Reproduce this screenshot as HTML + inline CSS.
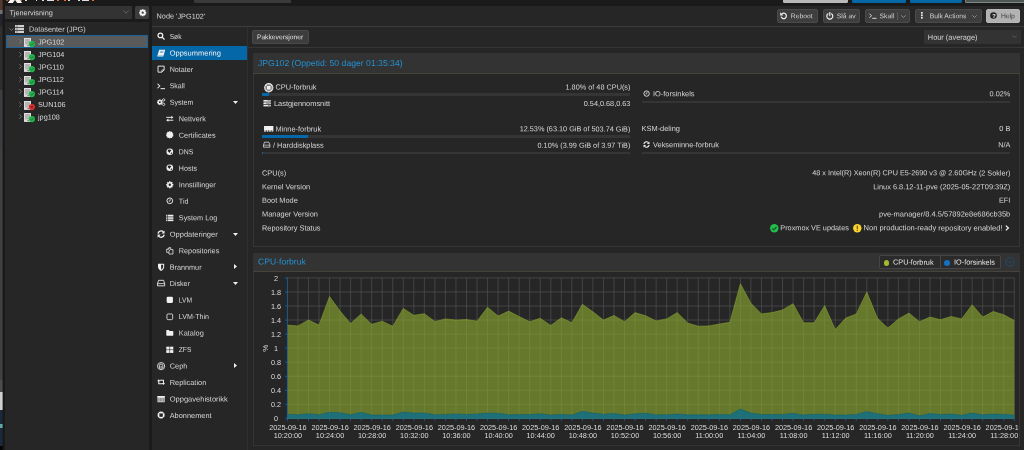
<!DOCTYPE html>
<html lang="nb">
<head>
<meta charset="utf-8">
<title>JPG102 - Proxmox Virtual Environment</title>
<style>
html,body{margin:0;padding:0;}
body{width:1024px;height:450px;overflow:hidden;background:#1b1b1b;position:relative;font-family:"Liberation Sans",sans-serif;}
.b{position:absolute;box-sizing:border-box;}
.t{position:absolute;white-space:nowrap;line-height:10px;height:10px;}
svg{position:absolute;overflow:visible;}
svg text{font-family:"Liberation Sans",sans-serif;}
#app{position:absolute;left:0;top:0;width:1024px;height:450px;overflow:hidden;will-change:transform;}
</style>
</head>
<body>
<div id="app">

<div id="desk">
<div class="b" style="left:0.00px;top:0.00px;width:3.20px;height:9.50px;background:#553a30;"></div>
<div class="b" style="left:0.00px;top:9.50px;width:3.20px;height:4.00px;background:#707070;"></div>
<div class="b" style="left:0.00px;top:13.50px;width:3.20px;height:12.50px;background:#22252c;"></div>
<div class="b" style="left:0.00px;top:26.00px;width:3.20px;height:64.00px;background:#2e2e2e;"></div>
<div class="b" style="left:0.00px;top:90.00px;width:3.20px;height:60.00px;background:#3a3e41;"></div>
<div class="b" style="left:0.00px;top:150.00px;width:3.20px;height:230.00px;background:#404040;"></div>
<div class="b" style="left:0.00px;top:380.00px;width:3.20px;height:12.00px;background:#4c4c4c;"></div>
<div class="b" style="left:0.00px;top:392.00px;width:3.20px;height:18.00px;background:#cfcfcf;"></div>
<div class="b" style="left:0.00px;top:410.00px;width:3.20px;height:36.00px;background:#1a2a3c;"></div>
<div class="b" style="left:0.00px;top:424.00px;width:3.20px;height:4.00px;background:#5fa9a0;"></div>
<div class="b" style="left:0.00px;top:446.00px;width:3.20px;height:4.00px;background:#050505;"></div>
<div class="b" style="left:2.00px;top:0.00px;width:3.00px;height:450.00px;background:linear-gradient(90deg,rgba(22,22,22,0),#171717 45%,#1b1b1b);"></div>
</div>
<div id="header">
<div class="b" style="left:3.00px;top:0.00px;width:1021.00px;height:5.50px;background:#1a1a1a;"></div>
<div class="b" style="left:5.90px;top:0.00px;width:2.40px;height:1.40px;background:#e5701f;border-radius:0 0 1px 1px;"></div>
<div class="b" style="left:20.00px;top:0.00px;width:2.40px;height:1.40px;background:#e5701f;border-radius:0 0 1px 1px;"></div>
<div class="b" style="left:9.00px;top:0.00px;width:4.50px;height:2.60px;background:#f4f4f4;transform:skewX(-35deg);"></div>
<div class="b" style="left:15.50px;top:0.00px;width:4.50px;height:2.60px;background:#f4f4f4;transform:skewX(35deg);"></div>
<div class="b" style="left:25.00px;top:0.00px;width:1.50px;height:0.45px;background:#ddd;"></div>
<div class="b" style="left:35.50px;top:0.00px;width:1.50px;height:0.45px;background:#ddd;"></div>
<div class="b" style="left:42.00px;top:0.00px;width:2.00px;height:0.45px;background:#ddd;"></div>
<div class="b" style="left:47.00px;top:0.00px;width:7.00px;height:0.45px;background:#ddd;"></div>
<div class="b" style="left:57.00px;top:0.00px;width:2.00px;height:0.45px;background:#e5701f;"></div>
<div class="b" style="left:63.50px;top:0.00px;width:2.50px;height:0.45px;background:#e5701f;"></div>
<div class="b" style="left:68.00px;top:0.00px;width:2.00px;height:0.45px;background:#ddd;"></div>
<div class="b" style="left:78.00px;top:0.00px;width:2.00px;height:0.45px;background:#ddd;"></div>
<div class="b" style="left:82.00px;top:0.00px;width:7.00px;height:0.45px;background:#ddd;"></div>
<div class="b" style="left:92.00px;top:0.00px;width:1.50px;height:0.45px;background:#e5701f;"></div>
<div class="b" style="left:194.20px;top:0.00px;width:96.60px;height:2.70px;background:#3a3a3a;border-radius:0 0 1px 1px;"></div>
<div class="b" style="left:783.00px;top:0.00px;width:64.80px;height:2.70px;background:#b9b9b9;border-radius:0 0 1.5px 1.5px;"></div>
<div class="b" style="left:852.00px;top:0.00px;width:53.50px;height:2.70px;background:#0467a8;border-radius:0 0 1.5px 1.5px;"></div>
<div class="b" style="left:909.50px;top:0.00px;width:52.50px;height:2.70px;background:#0467a8;border-radius:0 0 1.5px 1.5px;"></div>
<div class="b" style="left:965.00px;top:0.00px;width:60.00px;height:2.80px;background:#4d5653;border-radius:0 0 0 1.5px;border:0.5px solid #7c8886;border-top:0;"></div>
</div>
<div id="west">
<div class="b" style="left:5.00px;top:5.60px;width:127.30px;height:13.70px;background:#333333;"></div>
<svg class="ts" style="left:9px;top:15px" width="1" height="1"><text x="0.40" y="0.30" font-size="7.3" fill="#d8d8d8" text-anchor="start" transform="rotate(0.05 0.40 0.30)">Tjenervisning</text></svg>
<svg style="left:122.5px;top:10.4px" width="6" height="4" viewBox="0 0 6 4"><path d="M0.4 0.5 L3 3.2 L5.6 0.5" fill="none" stroke="#777" stroke-width="0.7"/></svg>
<div class="b" style="left:135.10px;top:5.60px;width:14.00px;height:13.60px;background:#3d3d3d;border-radius:1.5px;"></div>
<svg style="left:138.9px;top:8.7px" width="7.4" height="7.4" viewBox="0 0 14 14"><g fill="#f2f2f2"><rect x="5.3" y="0.3" width="3.4" height="3.6" transform="rotate(0 7 7)"/><rect x="5.3" y="0.3" width="3.4" height="3.6" transform="rotate(45 7 7)"/><rect x="5.3" y="0.3" width="3.4" height="3.6" transform="rotate(90 7 7)"/><rect x="5.3" y="0.3" width="3.4" height="3.6" transform="rotate(135 7 7)"/><rect x="5.3" y="0.3" width="3.4" height="3.6" transform="rotate(180 7 7)"/><rect x="5.3" y="0.3" width="3.4" height="3.6" transform="rotate(225 7 7)"/><rect x="5.3" y="0.3" width="3.4" height="3.6" transform="rotate(270 7 7)"/><rect x="5.3" y="0.3" width="3.4" height="3.6" transform="rotate(315 7 7)"/></g><circle cx="7" cy="7" r="3.7" fill="none" stroke="#f2f2f2" stroke-width="3"/></svg>
<div class="b" style="left:5.00px;top:21.70px;width:144.10px;height:430.00px;background:#262626;"></div>
<svg style="left:8.6px;top:28.2px" width="5" height="3" viewBox="0 0 5 3"><path d="M0.3 0.3 L2.5 2.5 L4.7 0.3" fill="none" stroke="#8a8a8a" stroke-width="0.7"/></svg>
<svg style="left:15px;top:25.2px" width="9" height="8" viewBox="0 0 9 8"><g fill="#cfcfcf"><rect x="0" y="0" width="9" height="2.2"/><rect x="0" y="2.9" width="9" height="2.2"/><rect x="0" y="5.8" width="9" height="2.2"/></g><g fill="#777"><rect x="0.8" y="0.7" width="2.2" height="0.8"/><rect x="0.8" y="3.6" width="2.2" height="0.8"/><rect x="0.8" y="6.5" width="2.2" height="0.8"/></g></svg>
<svg class="ts" style="left:28px;top:31px" width="1" height="1"><text x="0.90" y="0.60" font-size="7.3" fill="#d6d6d6" text-anchor="start" transform="rotate(0.05 0.90 0.60)">Datasenter (JPG)</text></svg>
<div class="b" style="left:6.00px;top:35.20px;width:142.10px;height:12.50px;background:#5a5a5a;border:0.7px solid #1c629a;"></div>
<svg style="left:19.4px;top:39.1px" width="3" height="5" viewBox="0 0 3 5"><path d="M0.3 0.3 L2.5 2.5 L0.3 4.7" fill="none" stroke="#8a8a8a" stroke-width="0.7"/></svg>
<svg style="left:23.8px;top:38.00px" width="12" height="10" viewBox="0 0 12 10"><rect x="0" y="0" width="7" height="8.9" fill="#dedede"/><rect x="1.1" y="1" width="4.8" height="5.6" fill="#b4b4b4"/><rect x="3.4" y="7.3" width="1.4" height="0.8" fill="#444"/><circle cx="7.9" cy="6.1" r="3.1" fill="#1fb649"/><path d="M6.3 6.1 L7.5 7.3 L9.6 5.0" fill="none" stroke="#2a6b40" stroke-width="0.9"/></svg>
<svg class="ts" style="left:38px;top:44px" width="1" height="1"><text x="0.00" y="0.50" font-size="7.3" fill="#d6d6d6" text-anchor="start" transform="rotate(0.05 0.00 0.50)">JPG102</text></svg>
<svg style="left:19.4px;top:51.6px" width="3" height="5" viewBox="0 0 3 5"><path d="M0.3 0.3 L2.5 2.5 L0.3 4.7" fill="none" stroke="#8a8a8a" stroke-width="0.7"/></svg>
<svg style="left:23.8px;top:50.50px" width="12" height="10" viewBox="0 0 12 10"><rect x="0" y="0" width="7" height="8.9" fill="#dedede"/><rect x="1.1" y="1" width="4.8" height="5.6" fill="#b4b4b4"/><rect x="3.4" y="7.3" width="1.4" height="0.8" fill="#444"/><circle cx="7.9" cy="6.1" r="3.1" fill="#1fb649"/><path d="M6.3 6.1 L7.5 7.3 L9.6 5.0" fill="none" stroke="#2a6b40" stroke-width="0.9"/></svg>
<svg class="ts" style="left:38px;top:57px" width="1" height="1"><text x="0.00" y="0.00" font-size="7.3" fill="#d6d6d6" text-anchor="start" transform="rotate(0.05 0.00 0.00)">JPG104</text></svg>
<svg style="left:19.4px;top:64.10000000000001px" width="3" height="5" viewBox="0 0 3 5"><path d="M0.3 0.3 L2.5 2.5 L0.3 4.7" fill="none" stroke="#8a8a8a" stroke-width="0.7"/></svg>
<svg style="left:23.8px;top:63.00px" width="12" height="10" viewBox="0 0 12 10"><rect x="0" y="0" width="7" height="8.9" fill="#dedede"/><rect x="1.1" y="1" width="4.8" height="5.6" fill="#b4b4b4"/><rect x="3.4" y="7.3" width="1.4" height="0.8" fill="#444"/><circle cx="7.9" cy="6.1" r="3.1" fill="#1fb649"/><path d="M6.3 6.1 L7.5 7.3 L9.6 5.0" fill="none" stroke="#2a6b40" stroke-width="0.9"/></svg>
<svg class="ts" style="left:38px;top:69px" width="1" height="1"><text x="0.00" y="0.50" font-size="7.3" fill="#d6d6d6" text-anchor="start" transform="rotate(0.05 0.00 0.50)">JPG110</text></svg>
<svg style="left:19.4px;top:76.60000000000001px" width="3" height="5" viewBox="0 0 3 5"><path d="M0.3 0.3 L2.5 2.5 L0.3 4.7" fill="none" stroke="#8a8a8a" stroke-width="0.7"/></svg>
<svg style="left:23.8px;top:75.50px" width="12" height="10" viewBox="0 0 12 10"><rect x="0" y="0" width="7" height="8.9" fill="#dedede"/><rect x="1.1" y="1" width="4.8" height="5.6" fill="#b4b4b4"/><rect x="3.4" y="7.3" width="1.4" height="0.8" fill="#444"/><circle cx="7.9" cy="6.1" r="3.1" fill="#1fb649"/><path d="M6.3 6.1 L7.5 7.3 L9.6 5.0" fill="none" stroke="#2a6b40" stroke-width="0.9"/></svg>
<svg class="ts" style="left:38px;top:82px" width="1" height="1"><text x="0.00" y="0.00" font-size="7.3" fill="#d6d6d6" text-anchor="start" transform="rotate(0.05 0.00 0.00)">JPG112</text></svg>
<svg style="left:19.4px;top:89.10000000000001px" width="3" height="5" viewBox="0 0 3 5"><path d="M0.3 0.3 L2.5 2.5 L0.3 4.7" fill="none" stroke="#8a8a8a" stroke-width="0.7"/></svg>
<svg style="left:23.8px;top:88.00px" width="12" height="10" viewBox="0 0 12 10"><rect x="0" y="0" width="7" height="8.9" fill="#dedede"/><rect x="1.1" y="1" width="4.8" height="5.6" fill="#b4b4b4"/><rect x="3.4" y="7.3" width="1.4" height="0.8" fill="#444"/><circle cx="7.9" cy="6.1" r="3.1" fill="#1fb649"/><path d="M6.3 6.1 L7.5 7.3 L9.6 5.0" fill="none" stroke="#2a6b40" stroke-width="0.9"/></svg>
<svg class="ts" style="left:38px;top:94px" width="1" height="1"><text x="0.00" y="0.50" font-size="7.3" fill="#d6d6d6" text-anchor="start" transform="rotate(0.05 0.00 0.50)">JPG114</text></svg>
<svg style="left:19.4px;top:101.60000000000001px" width="3" height="5" viewBox="0 0 3 5"><path d="M0.3 0.3 L2.5 2.5 L0.3 4.7" fill="none" stroke="#8a8a8a" stroke-width="0.7"/></svg>
<svg style="left:23.8px;top:100.50px" width="12" height="10" viewBox="0 0 12 10"><rect x="0" y="0" width="7" height="8.9" fill="#dedede"/><rect x="1.1" y="1" width="4.8" height="5.6" fill="#b4b4b4"/><rect x="3.4" y="7.3" width="1.4" height="0.8" fill="#444"/><circle cx="7.9" cy="6.1" r="3.1" fill="#dd2c2c"/><path d="M6.7 4.9 L9.1 7.3 M9.1 4.9 L6.7 7.3" fill="none" stroke="#6b2020" stroke-width="0.8"/></svg>
<svg class="ts" style="left:38px;top:107px" width="1" height="1"><text x="0.00" y="0.00" font-size="7.3" fill="#d6d6d6" text-anchor="start" transform="rotate(0.05 0.00 0.00)">SUN106</text></svg>
<svg style="left:19.4px;top:114.10000000000001px" width="3" height="5" viewBox="0 0 3 5"><path d="M0.3 0.3 L2.5 2.5 L0.3 4.7" fill="none" stroke="#8a8a8a" stroke-width="0.7"/></svg>
<svg style="left:23.8px;top:113.00px" width="12" height="10" viewBox="0 0 12 10"><rect x="0" y="0" width="7" height="8.9" fill="#dedede"/><rect x="1.1" y="1" width="4.8" height="5.6" fill="#b4b4b4"/><rect x="3.4" y="7.3" width="1.4" height="0.8" fill="#444"/><circle cx="7.9" cy="6.1" r="3.1" fill="#1fb649"/><path d="M6.3 6.1 L7.5 7.3 L9.6 5.0" fill="none" stroke="#2a6b40" stroke-width="0.9"/></svg>
<svg class="ts" style="left:38px;top:119px" width="1" height="1"><text x="0.00" y="0.50" font-size="7.3" fill="#d6d6d6" text-anchor="start" transform="rotate(0.05 0.00 0.50)">jpg108</text></svg>
</div>
<div id="center">
<div class="b" style="left:151.90px;top:5.60px;width:873.00px;height:445.00px;background:#262626;"></div>
<svg class="ts" style="left:156px;top:18px" width="1" height="1"><text x="0.60" y="0.60" font-size="7.3" fill="#d6d6d6" text-anchor="start" transform="rotate(0.05 0.60 0.60)">Node 'JPG102'</text></svg>
<div class="b" style="left:151.90px;top:26.10px;width:873.00px;height:0.70px;background:#3c3c3c;"></div>
<div class="b" style="left:776.70px;top:9.10px;width:41.10px;height:13.60px;background:#3e3e3e;border-radius:2px;border:0.6px solid #4a4a4a;"></div>
<svg style="left:780.0px;top:11.9px" width="7.4" height="7.4" viewBox="0 0 14 14"><path d="M3.4 3.8 A5.1 5.1 0 1 1 2.1 8.8" fill="none" stroke="#f0f0f0" stroke-width="2.3"/><path d="M0.4 0.6 L0.4 6.4 L6.2 6.4 Z" fill="#f0f0f0"/></svg>
<svg class="ts" style="left:790px;top:18px" width="1" height="1"><text x="0.80" y="0.20" font-size="6.75" fill="#cdcdcd" text-anchor="start" transform="rotate(0.05 0.80 0.20)">Reboot</text></svg>
<div class="b" style="left:822.90px;top:9.10px;width:37.60px;height:13.60px;background:#3e3e3e;border-radius:2px;border:0.6px solid #4a4a4a;"></div>
<svg style="left:825.7px;top:11.8px" width="7.6" height="7.6" viewBox="0 0 14 14"><path d="M3.8 3.2 A5.5 5.5 0 1 0 10.2 3.2" fill="none" stroke="#f0f0f0" stroke-width="2.1" stroke-linecap="round"/><path d="M7 0.9 L7 6.8" stroke="#f0f0f0" stroke-width="2.1" stroke-linecap="round"/></svg>
<svg class="ts" style="left:836px;top:18px" width="1" height="1"><text x="0.80" y="0.20" font-size="6.75" fill="#cdcdcd" text-anchor="start" transform="rotate(0.05 0.80 0.20)">Slå av</text></svg>
<div class="b" style="left:865.00px;top:9.10px;width:45.00px;height:13.60px;background:#3e3e3e;border-radius:2px;border:0.6px solid #4a4a4a;"></div>
<svg style="left:868.6px;top:12.8px" width="8" height="6" viewBox="0 0 16 12"><path d="M1 1.5 L5 5.5 L1 9.5" fill="none" stroke="#f0f0f0" stroke-width="1.8"/><path d="M6.5 10.6 L15 10.6" stroke="#f0f0f0" stroke-width="1.8"/></svg>
<svg class="ts" style="left:879px;top:18px" width="1" height="1"><text x="0.60" y="0.20" font-size="6.75" fill="#cdcdcd" text-anchor="start" transform="rotate(0.05 0.60 0.20)">Skall</text></svg>
<div class="b" style="left:897.30px;top:11.60px;width:0.60px;height:8.40px;background:#5a5a5a;"></div>
<svg style="left:901.3px;top:14.7px" width="5" height="3" viewBox="0 0 5 3"><path d="M0.3 0.3 L2.5 2.5 L4.7 0.3" fill="none" stroke="#aaa" stroke-width="0.7"/></svg>
<div class="b" style="left:915.10px;top:9.10px;width:66.50px;height:13.60px;background:#3e3e3e;border-radius:2px;border:0.6px solid #4a4a4a;"></div>
<svg style="left:921.1px;top:12.4px" width="1.7" height="6.8" viewBox="0 0 2 8"><g fill="#f0f0f0"><rect x="0" y="0" width="2" height="2"/><rect x="0" y="2.9" width="2" height="2"/><rect x="0" y="5.8" width="2" height="2"/></g></svg>
<svg class="ts" style="left:929px;top:18px" width="1" height="1"><text x="0.70" y="0.20" font-size="6.75" fill="#cdcdcd" text-anchor="start" transform="rotate(0.05 0.70 0.20)">Bulk Actions</text></svg>
<svg style="left:971.7px;top:14.7px" width="5" height="3" viewBox="0 0 5 3"><path d="M0.3 0.3 L2.5 2.5 L4.7 0.3" fill="none" stroke="#aaa" stroke-width="0.7"/></svg>
<div class="b" style="left:986.20px;top:9.10px;width:33.50px;height:13.60px;background:#b2b2b2;border-radius:2px;border:0.6px solid #b8b8b8;"></div>
<svg style="left:990.4px;top:12.4px" width="7" height="7" viewBox="0 0 14 14"><circle cx="7" cy="7" r="6.6" fill="#222"/></svg>
<svg class="ts" style="left:993px;top:18px" width="1" height="1"><text x="0.90" y="0.00" font-size="5.8" fill="#f4f4f4" text-anchor="middle" transform="rotate(0.05 0.90 0.00)" font-weight="bold">?</text></svg>
<svg class="ts" style="left:1000px;top:18px" width="1" height="1"><text x="0.90" y="0.20" font-size="6.75" fill="#404040" text-anchor="start" transform="rotate(0.05 0.90 0.20)">Help</text></svg>
<div id="menu">
<svg style="left:156.90px;top:32.10px" width="8.2" height="8.2" viewBox="0 0 16 16"><circle cx="6.6" cy="6.6" r="4.6" fill="none" stroke="#f0f0f0" stroke-width="2.4"/><path d="M10 10 L14 14" stroke="#f0f0f0" stroke-width="2.6" stroke-linecap="round"/></svg>
<svg class="ts" style="left:169px;top:38px" width="1" height="1"><text x="0.70" y="0.90" font-size="7.3" fill="#d6d6d6" text-anchor="start" transform="rotate(0.05 0.70 0.90)" textLength="11.8" lengthAdjust="spacingAndGlyphs">Søk</text></svg>
<div class="b" style="left:151.90px;top:45.88px;width:95.10px;height:13.80px;background:#0467a8;"></div>
<svg style="left:156.90px;top:48.58px" width="8.2" height="8.2" viewBox="0 0 16 16"><path d="M4.6 1.6 L15.4 1.6 Q16 1.6 15.8 2.4 L13 12.4 L12.2 14.6 L1.6 14.6 Q0.2 14.6 0.6 13 L1.4 11.4 L4 2.4 Q4.2 1.6 4.6 1.6 Z" fill="#f0f0f0"/><path d="M6.4 4.6 L12.6 4.6 M5.8 6.8 L12 6.8" stroke="#0467a8" stroke-width="0.9"/><path d="M2.4 12.6 L11.6 12.6" stroke="#0467a8" stroke-width="0.9" opacity="0.7"/></svg>
<svg class="ts" style="left:169px;top:55px" width="1" height="1"><text x="0.70" y="0.38" font-size="7.3" fill="#f4f4f4" text-anchor="start" transform="rotate(0.05 0.70 0.38)" textLength="51.2" lengthAdjust="spacingAndGlyphs">Oppsummering</text></svg>
<svg style="left:156.90px;top:65.06px" width="8.2" height="8.2" viewBox="0 0 16 16"><path d="M2 2.2 L14 2.2 L14 9.6 L9.6 14 L2 14 Z" fill="none" stroke="#f0f0f0" stroke-width="1.8" stroke-linejoin="round"/><path d="M14 9.6 L9.6 9.6 L9.6 14" fill="none" stroke="#f0f0f0" stroke-width="1.4"/></svg>
<svg class="ts" style="left:169px;top:71px" width="1" height="1"><text x="0.70" y="0.86" font-size="7.3" fill="#d6d6d6" text-anchor="start" transform="rotate(0.05 0.70 0.86)" textLength="23.4" lengthAdjust="spacingAndGlyphs">Notater</text></svg>
<svg style="left:156.90px;top:81.54px" width="8.2" height="8.2" viewBox="0 0 16 16"><path d="M1 3.4 L5.4 7.8 L1 12.2" fill="none" stroke="#f0f0f0" stroke-width="2"/><path d="M7 13 L15.6 13" stroke="#f0f0f0" stroke-width="2"/></svg>
<svg class="ts" style="left:169px;top:88px" width="1" height="1"><text x="0.70" y="0.34" font-size="7.3" fill="#d6d6d6" text-anchor="start" transform="rotate(0.05 0.70 0.34)" textLength="15.1" lengthAdjust="spacingAndGlyphs">Skall</text></svg>
<svg style="left:156.90px;top:98.02px" width="8.2" height="8.2" viewBox="0 0 16 16"><g fill="#f0f0f0"><circle cx="5.6" cy="8.2" r="4"/><rect x="4.3" y="2.6" width="2.6" height="3" transform="rotate(0 5.6 8.2)"/><rect x="4.3" y="2.6" width="2.6" height="3" transform="rotate(45 5.6 8.2)"/><rect x="4.3" y="2.6" width="2.6" height="3" transform="rotate(90 5.6 8.2)"/><rect x="4.3" y="2.6" width="2.6" height="3" transform="rotate(135 5.6 8.2)"/><rect x="4.3" y="2.6" width="2.6" height="3" transform="rotate(180 5.6 8.2)"/><rect x="4.3" y="2.6" width="2.6" height="3" transform="rotate(225 5.6 8.2)"/><rect x="4.3" y="2.6" width="2.6" height="3" transform="rotate(270 5.6 8.2)"/><rect x="4.3" y="2.6" width="2.6" height="3" transform="rotate(315 5.6 8.2)"/></g><circle cx="5.6" cy="8.2" r="1.8" fill="#262626"/><circle cx="13" cy="3.8" r="2.3" fill="none" stroke="#f0f0f0" stroke-width="1.5"/><circle cx="13" cy="12.4" r="2.3" fill="none" stroke="#f0f0f0" stroke-width="1.5"/></svg>
<svg class="ts" style="left:169px;top:104px" width="1" height="1"><text x="0.70" y="0.82" font-size="7.3" fill="#d6d6d6" text-anchor="start" transform="rotate(0.05 0.70 0.82)" textLength="23.8" lengthAdjust="spacingAndGlyphs">System</text></svg>
<svg style="left:233.2px;top:100.82px" width="5" height="3" viewBox="0 0 5 3"><path d="M0 0 L5 0 L2.5 3 Z" fill="#f0f0f0"/></svg>
<svg style="left:166.20px;top:114.80px" width="7.6" height="7.6" viewBox="0 0 16 16"><path d="M0.6 5 L12 5" stroke="#f0f0f0" stroke-width="2"/><path d="M11 1.6 L15.6 5 L11 8.4 Z" fill="#f0f0f0"/><path d="M4 11 L15.4 11" stroke="#f0f0f0" stroke-width="2"/><path d="M5 7.6 L0.4 11 L5 14.4 Z" fill="#f0f0f0"/></svg>
<svg class="ts" style="left:178px;top:121px" width="1" height="1"><text x="0.80" y="0.30" font-size="7.3" fill="#d6d6d6" text-anchor="start" transform="rotate(0.05 0.80 0.30)" textLength="27.0" lengthAdjust="spacingAndGlyphs">Nettverk</text></svg>
<svg style="left:166.20px;top:131.28px" width="7.6" height="7.6" viewBox="0 0 16 16"><circle cx="8" cy="8" r="6.6" fill="#f0f0f0"/><circle cx="8" cy="1.6" r="1.5" fill="#f0f0f0" transform="rotate(0 8 8)"/><circle cx="8" cy="1.6" r="1.5" fill="#f0f0f0" transform="rotate(36 8 8)"/><circle cx="8" cy="1.6" r="1.5" fill="#f0f0f0" transform="rotate(72 8 8)"/><circle cx="8" cy="1.6" r="1.5" fill="#f0f0f0" transform="rotate(108 8 8)"/><circle cx="8" cy="1.6" r="1.5" fill="#f0f0f0" transform="rotate(144 8 8)"/><circle cx="8" cy="1.6" r="1.5" fill="#f0f0f0" transform="rotate(180 8 8)"/><circle cx="8" cy="1.6" r="1.5" fill="#f0f0f0" transform="rotate(216 8 8)"/><circle cx="8" cy="1.6" r="1.5" fill="#f0f0f0" transform="rotate(252 8 8)"/><circle cx="8" cy="1.6" r="1.5" fill="#f0f0f0" transform="rotate(288 8 8)"/><circle cx="8" cy="1.6" r="1.5" fill="#f0f0f0" transform="rotate(324 8 8)"/></svg>
<svg class="ts" style="left:178px;top:137px" width="1" height="1"><text x="0.80" y="0.78" font-size="7.3" fill="#d6d6d6" text-anchor="start" transform="rotate(0.05 0.80 0.78)" textLength="36.8" lengthAdjust="spacingAndGlyphs">Certificates</text></svg>
<svg style="left:166.20px;top:147.76px" width="7.6" height="7.6" viewBox="0 0 16 16"><circle cx="8" cy="8" r="7" fill="#f0f0f0"/><path d="M4 3.6 L8.6 3 L11.4 5.2 L9 7.6 L7.6 10.4 L5.6 8.2 L3.6 7 Z" fill="#262626"/><path d="M10.4 10 L13 9 L12 12.4 L10 13 Z" fill="#262626"/></svg>
<svg class="ts" style="left:178px;top:154px" width="1" height="1"><text x="0.80" y="0.26" font-size="7.3" fill="#d6d6d6" text-anchor="start" transform="rotate(0.05 0.80 0.26)" textLength="14.6" lengthAdjust="spacingAndGlyphs">DNS</text></svg>
<svg style="left:166.20px;top:164.24px" width="7.6" height="7.6" viewBox="0 0 16 16"><circle cx="8" cy="8" r="7" fill="#f0f0f0"/><path d="M4 3.6 L8.6 3 L11.4 5.2 L9 7.6 L7.6 10.4 L5.6 8.2 L3.6 7 Z" fill="#262626"/><path d="M10.4 10 L13 9 L12 12.4 L10 13 Z" fill="#262626"/></svg>
<svg class="ts" style="left:178px;top:170px" width="1" height="1"><text x="0.80" y="0.74" font-size="7.3" fill="#d6d6d6" text-anchor="start" transform="rotate(0.05 0.80 0.74)" textLength="18.2" lengthAdjust="spacingAndGlyphs">Hosts</text></svg>
<svg style="left:166.20px;top:180.72px" width="7.6" height="7.6" viewBox="0 0 16 16"><g fill="#f0f0f0"><circle cx="8" cy="8" r="5.4"/><rect x="6.3" y="0.6" width="3.4" height="4" transform="rotate(0 8 8)"/><rect x="6.3" y="0.6" width="3.4" height="4" transform="rotate(45 8 8)"/><rect x="6.3" y="0.6" width="3.4" height="4" transform="rotate(90 8 8)"/><rect x="6.3" y="0.6" width="3.4" height="4" transform="rotate(135 8 8)"/><rect x="6.3" y="0.6" width="3.4" height="4" transform="rotate(180 8 8)"/><rect x="6.3" y="0.6" width="3.4" height="4" transform="rotate(225 8 8)"/><rect x="6.3" y="0.6" width="3.4" height="4" transform="rotate(270 8 8)"/><rect x="6.3" y="0.6" width="3.4" height="4" transform="rotate(315 8 8)"/></g><circle cx="8" cy="8" r="2.5" fill="#262626"/></svg>
<svg class="ts" style="left:178px;top:187px" width="1" height="1"><text x="0.80" y="0.22" font-size="7.3" fill="#d6d6d6" text-anchor="start" transform="rotate(0.05 0.80 0.22)" textLength="37.0" lengthAdjust="spacingAndGlyphs">Innstillinger</text></svg>
<svg style="left:166.20px;top:197.20px" width="7.6" height="7.6" viewBox="0 0 16 16"><circle cx="8" cy="8" r="6" fill="none" stroke="#f0f0f0" stroke-width="2"/><path d="M8.6 4.4 L8.6 8.6 L5.6 8.6" fill="none" stroke="#f0f0f0" stroke-width="1.6"/></svg>
<svg class="ts" style="left:178px;top:203px" width="1" height="1"><text x="0.80" y="0.70" font-size="7.3" fill="#d6d6d6" text-anchor="start" transform="rotate(0.05 0.80 0.70)" textLength="9.7" lengthAdjust="spacingAndGlyphs">Tid</text></svg>
<svg style="left:166.20px;top:213.68px" width="7.6" height="7.6" viewBox="0 0 16 16"><g fill="#f0f0f0"><rect x="0.4" y="1.6" width="2.6" height="2.6"/><rect x="4.2" y="1.6" width="11.4" height="2.6"/><rect x="0.4" y="5.2" width="2.6" height="2.6"/><rect x="4.2" y="5.2" width="11.4" height="2.6"/><rect x="0.4" y="8.8" width="2.6" height="2.6"/><rect x="4.2" y="8.8" width="11.4" height="2.6"/><rect x="0.4" y="12.4" width="2.6" height="2.6"/><rect x="4.2" y="12.4" width="11.4" height="2.6"/></g></svg>
<svg class="ts" style="left:178px;top:220px" width="1" height="1"><text x="0.80" y="0.18" font-size="7.3" fill="#d6d6d6" text-anchor="start" transform="rotate(0.05 0.80 0.18)" textLength="38.5" lengthAdjust="spacingAndGlyphs">System Log</text></svg>
<svg style="left:156.90px;top:229.86px" width="8.2" height="8.2" viewBox="0 0 16 16"><path d="M2 7 A6 6 0 0 1 12.6 4" fill="none" stroke="#f0f0f0" stroke-width="2.6"/><path d="M14.8 1 L14.8 7 L8.8 7 Z" fill="#f0f0f0"/><path d="M14 9 A6 6 0 0 1 3.4 12" fill="none" stroke="#f0f0f0" stroke-width="2.6"/><path d="M1.2 15 L1.2 9 L7.2 9 Z" fill="#f0f0f0"/></svg>
<svg class="ts" style="left:169px;top:236px" width="1" height="1"><text x="0.70" y="0.66" font-size="7.3" fill="#d6d6d6" text-anchor="start" transform="rotate(0.05 0.70 0.66)" textLength="48.0" lengthAdjust="spacingAndGlyphs">Oppdateringer</text></svg>
<svg style="left:233.2px;top:232.66px" width="5" height="3" viewBox="0 0 5 3"><path d="M0 0 L5 0 L2.5 3 Z" fill="#f0f0f0"/></svg>
<svg style="left:166.20px;top:246.64px" width="7.6" height="7.6" viewBox="0 0 16 16"><path d="M6.4 1.4 L6.4 4.6 L1.4 4.6 L1.4 11.4 L5.6 11.4" fill="none" stroke="#f0f0f0" stroke-width="1.6" stroke-linejoin="round"/><path d="M6.4 1.4 L3 4.6" stroke="#f0f0f0" stroke-width="1.4"/><path d="M6.4 1.4 L10 1.4 L10 4" fill="none" stroke="#f0f0f0" stroke-width="1.6"/><path d="M9 5.4 L14.6 5.4 L14.6 14.8 L6.2 14.8 L6.2 8.4 Z" fill="none" stroke="#f0f0f0" stroke-width="1.6" stroke-linejoin="round"/></svg>
<svg class="ts" style="left:178px;top:253px" width="1" height="1"><text x="0.80" y="0.14" font-size="7.3" fill="#d6d6d6" text-anchor="start" transform="rotate(0.05 0.80 0.14)" textLength="40.5" lengthAdjust="spacingAndGlyphs">Repositories</text></svg>
<svg style="left:156.90px;top:262.82px" width="8.2" height="8.2" viewBox="0 0 16 16"><path d="M2 1.6 L14 1.6 L14 8 C14 11.6 11 14 8 15.4 C5 14 2 11.6 2 8 Z" fill="#f0f0f0"/><path d="M8 3.6 L12 3.6 L12 8 C12 10.4 10 12 8 13 Z" fill="#262626"/></svg>
<svg class="ts" style="left:169px;top:269px" width="1" height="1"><text x="0.70" y="0.62" font-size="7.3" fill="#d6d6d6" text-anchor="start" transform="rotate(0.05 0.70 0.62)" textLength="31.9" lengthAdjust="spacingAndGlyphs">Brannmur</text></svg>
<svg style="left:234px;top:264.42px" width="3" height="5" viewBox="0 0 3 5"><path d="M0 0 L3 2.5 L0 5 Z" fill="#f0f0f0"/></svg>
<svg style="left:156.90px;top:279.30px" width="8.2" height="8.2" viewBox="0 0 16 16"><path d="M3.2 2.6 L12.8 2.6 L15 9 L15 13.4 L1 13.4 L1 9 Z" fill="none" stroke="#f0f0f0" stroke-width="1.7" stroke-linejoin="round"/><path d="M1 9 L15 9" stroke="#f0f0f0" stroke-width="1.5"/></svg>
<svg class="ts" style="left:169px;top:286px" width="1" height="1"><text x="0.70" y="0.10" font-size="7.3" fill="#d6d6d6" text-anchor="start" transform="rotate(0.05 0.70 0.10)" textLength="20.2" lengthAdjust="spacingAndGlyphs">Disker</text></svg>
<svg style="left:233.2px;top:282.10px" width="5" height="3" viewBox="0 0 5 3"><path d="M0 0 L5 0 L2.5 3 Z" fill="#f0f0f0"/></svg>
<svg style="left:166.20px;top:296.08px" width="7.6" height="7.6" viewBox="0 0 16 16"><rect x="1.4" y="1.4" width="13.2" height="13.2" rx="2.4" fill="#f0f0f0"/></svg>
<svg class="ts" style="left:178px;top:302px" width="1" height="1"><text x="0.80" y="0.58" font-size="7.3" fill="#d6d6d6" text-anchor="start" transform="rotate(0.05 0.80 0.58)" textLength="13.3" lengthAdjust="spacingAndGlyphs">LVM</text></svg>
<svg style="left:166.20px;top:312.56px" width="7.6" height="7.6" viewBox="0 0 16 16"><rect x="2" y="2" width="12" height="12" rx="2.4" fill="none" stroke="#f0f0f0" stroke-width="1.7"/></svg>
<svg class="ts" style="left:178px;top:319px" width="1" height="1"><text x="0.80" y="0.06" font-size="7.3" fill="#d6d6d6" text-anchor="start" transform="rotate(0.05 0.80 0.06)" textLength="30.2" lengthAdjust="spacingAndGlyphs">LVM-Thin</text></svg>
<svg style="left:166.20px;top:329.04px" width="7.6" height="7.6" viewBox="0 0 16 16"><path d="M0.6 3.4 Q0.6 2.2 1.8 2.2 L5.8 2.2 Q7 2.2 7 3.4 L7 4.2 L14.2 4.2 Q15.4 4.2 15.4 5.4 L15.4 12.8 Q15.4 14 14.2 14 L1.8 14 Q0.6 14 0.6 12.8 Z" fill="#f0f0f0"/></svg>
<svg class="ts" style="left:178px;top:335px" width="1" height="1"><text x="0.80" y="0.54" font-size="7.3" fill="#d6d6d6" text-anchor="start" transform="rotate(0.05 0.80 0.54)" textLength="25.0" lengthAdjust="spacingAndGlyphs">Katalog</text></svg>
<svg style="left:166.20px;top:345.52px" width="7.6" height="7.6" viewBox="0 0 16 16"><g fill="#f0f0f0"><rect x="0.6" y="1.4" width="6.8" height="6"/><rect x="8.6" y="1.4" width="6.8" height="6"/><rect x="0.6" y="8.6" width="6.8" height="6"/><rect x="8.6" y="8.6" width="6.8" height="6"/></g></svg>
<svg class="ts" style="left:178px;top:352px" width="1" height="1"><text x="0.80" y="0.02" font-size="7.3" fill="#d6d6d6" text-anchor="start" transform="rotate(0.05 0.80 0.02)" textLength="12.6" lengthAdjust="spacingAndGlyphs">ZFS</text></svg>
<svg style="left:156.90px;top:361.70px" width="8.2" height="8.2" viewBox="0 0 16 16"><circle cx="8" cy="8" r="7" fill="none" stroke="#dadada" stroke-width="1.9"/><path d="M4.6 13 L4.6 7.4 A3.4 3.4 0 0 1 11.4 7.4 L11.4 13 M8 13.6 L8 7.6" fill="none" stroke="#dadada" stroke-width="1.9"/></svg>
<svg class="ts" style="left:169px;top:368px" width="1" height="1"><text x="0.70" y="0.50" font-size="7.3" fill="#d6d6d6" text-anchor="start" transform="rotate(0.05 0.70 0.50)" textLength="17.7" lengthAdjust="spacingAndGlyphs">Ceph</text></svg>
<svg style="left:234px;top:363.30px" width="3" height="5" viewBox="0 0 3 5"><path d="M0 0 L3 2.5 L0 5 Z" fill="#f0f0f0"/></svg>
<svg style="left:156.90px;top:378.18px" width="8.2" height="8.2" viewBox="0 0 16 16"><path d="M3.4 5 L3.4 11.4 L10.6 11.4" fill="none" stroke="#f0f0f0" stroke-width="2"/><path d="M0.2 6.4 L3.4 2.2 L6.6 6.4 Z" fill="#f0f0f0"/><path d="M12.6 11 L12.6 4.6 L5.4 4.6" fill="none" stroke="#f0f0f0" stroke-width="2"/><path d="M9.4 9.6 L12.6 13.8 L15.8 9.6 Z" fill="#f0f0f0"/></svg>
<svg class="ts" style="left:169px;top:384px" width="1" height="1"><text x="0.70" y="0.98" font-size="7.3" fill="#d6d6d6" text-anchor="start" transform="rotate(0.05 0.70 0.98)" textLength="36.6" lengthAdjust="spacingAndGlyphs">Replication</text></svg>
<svg style="left:156.90px;top:394.66px" width="8.2" height="8.2" viewBox="0 0 16 16"><rect x="0.8" y="2" width="14.4" height="12" rx="1" fill="#c9c9c9"/><rect x="0.8" y="2" width="14.4" height="2.6" fill="#f0f0f0"/><g fill="#888"><rect x="2.6" y="6" width="2" height="6.4"/><rect x="5.6" y="6" width="2" height="6.4"/><rect x="8.6" y="6" width="2" height="6.4"/><rect x="11.6" y="6" width="2" height="6.4"/></g></svg>
<svg class="ts" style="left:169px;top:401px" width="1" height="1"><text x="0.70" y="0.46" font-size="7.3" fill="#d6d6d6" text-anchor="start" transform="rotate(0.05 0.70 0.46)" textLength="58.1" lengthAdjust="spacingAndGlyphs">Oppgavehistorikk</text></svg>
<svg style="left:156.90px;top:411.14px" width="8.2" height="8.2" viewBox="0 0 16 16"><circle cx="8" cy="8" r="5.3" fill="none" stroke="#f0f0f0" stroke-width="3.2"/><path d="M2.4 2.4 L5.4 5.4 M13.6 2.4 L10.6 5.4 M2.4 13.6 L5.4 10.6 M13.6 13.6 L10.6 10.6" stroke="#262626" stroke-width="1.2"/></svg>
<svg class="ts" style="left:169px;top:417px" width="1" height="1"><text x="0.70" y="0.94" font-size="7.3" fill="#d6d6d6" text-anchor="start" transform="rotate(0.05 0.70 0.94)" textLength="41.9" lengthAdjust="spacingAndGlyphs">Abonnement</text></svg>
<div class="b" style="left:247.00px;top:26.80px;width:0.90px;height:424.00px;background:#303030;"></div>
</div>
<div id="content">
<div class="b" style="left:252.00px;top:30.20px;width:56.80px;height:13.60px;background:#3d3d3d;border-radius:2px;border:0.6px solid #4a4a4a;"></div>
<svg class="ts" style="left:256px;top:39px" width="1" height="1"><text x="0.90" y="0.30" font-size="6.75" fill="#e0e0e0" text-anchor="start" transform="rotate(0.05 0.90 0.30)" textLength="46.4" lengthAdjust="spacingAndGlyphs">Pakkeversjoner</text></svg>
<div class="b" style="left:924.20px;top:30.20px;width:96.40px;height:13.60px;background:#333333;border-radius:1px;"></div>
<svg class="ts" style="left:927px;top:39px" width="1" height="1"><text x="0.80" y="0.80" font-size="7.4" fill="#d8d8d8" text-anchor="start" transform="rotate(0.05 0.80 0.80)">Hour (average)</text></svg>
<svg style="left:1011.6px;top:35.4px" width="5" height="3" viewBox="0 0 5 3"><path d="M0.3 0.3 L2.5 2.5 L4.7 0.3" fill="none" stroke="#666" stroke-width="0.7"/></svg>
<div class="b" style="left:248.00px;top:47.00px;width:776.00px;height:0.70px;background:#363636;"></div>
<div class="b" style="left:253.10px;top:53.40px;width:766.50px;height:193.30px;background:#262626;border:0.7px solid #363531;"></div>
<div class="b" style="left:253.10px;top:53.40px;width:766.50px;height:20.20px;background:#333333;"></div>
<div class="b" style="left:253.10px;top:73.40px;width:766.50px;height:0.60px;background:#45433a;"></div>
<svg class="ts" style="left:258px;top:66px" width="1" height="1"><text x="0.00" y="0.00" font-size="8.6" fill="#2390d0" text-anchor="start" transform="rotate(0.05 0.00 0.00)" textLength="144.6" lengthAdjust="spacingAndGlyphs">JPG102 (Oppetid: 50 dager 01:35:34)</text></svg>
<svg style="left:263.6px;top:82.9px" width="9.5" height="9.5" viewBox="0 0 16 16"><circle cx="8" cy="8" r="7.8" fill="#f0f0f0"/><rect x="4.2" y="4.2" width="7.6" height="7.6" rx="1" fill="none" stroke="#555" stroke-width="1.2"/><g stroke="#555" stroke-width="0.9"><path d="M6 1.6V4M8 1.6V4M10 1.6V4M6 12V14.4M8 12V14.4M10 12V14.4M1.6 6H4M1.6 8H4M1.6 10H4M12 6H14.4M12 8H14.4M12 10H14.4"/></g></svg>
<svg class="ts" style="left:275px;top:89px" width="1" height="1"><text x="0.40" y="0.50" font-size="7.42" fill="#d6d6d6" text-anchor="start" transform="rotate(0.05 0.40 0.50)">CPU-forbruk</text></svg>
<svg class="ts" style="left:630px;top:89px" width="1" height="1"><text x="0.40" y="0.50" font-size="7.3" fill="#d6d6d6" text-anchor="end" transform="rotate(0.05 0.40 0.50)">1.80% of 48 CPU(s)</text></svg>
<div class="b" style="left:262.00px;top:93.30px;width:368.40px;height:2.70px;background:#353535;"></div><div class="b" style="left:262.00px;top:93.30px;width:6.63px;height:2.70px;background:#0468aa;"></div>
<svg style="left:263.0px;top:100.3px" width="8.2" height="6.4" viewBox="0 0 16 14"><g fill="#e8e8e8"><rect x="0" y="0" width="16" height="3.6"/><rect x="0" y="5.2" width="16" height="3.6"/><rect x="0" y="10.4" width="16" height="3.6"/></g><g fill="#444"><rect x="9" y="1.2" width="5" height="1.2"/><rect x="6" y="6.4" width="8" height="1.2"/><rect x="10" y="11.6" width="4" height="1.2"/></g></svg>
<svg class="ts" style="left:274px;top:106px" width="1" height="1"><text x="0.00" y="0.00" font-size="7.42" fill="#d6d6d6" text-anchor="start" transform="rotate(0.05 0.00 0.00)">Lastgjennomsnitt</text></svg>
<svg class="ts" style="left:630px;top:106px" width="1" height="1"><text x="0.40" y="0.00" font-size="7.3" fill="#d6d6d6" text-anchor="end" transform="rotate(0.05 0.40 0.00)">0.54,0.68,0.63</text></svg>
<svg style="left:263.5px;top:126.3px" width="9.4" height="5.6" viewBox="0 0 20 12"><rect x="0" y="0" width="20" height="9" fill="#f0f0f0"/><g fill="#f0f0f0"><rect x="0" y="9" width="4" height="3"/><rect x="5.4" y="9" width="4" height="3"/><rect x="10.8" y="9" width="4" height="3"/><rect x="16" y="9" width="4" height="3"/></g></svg>
<svg class="ts" style="left:275px;top:131px" width="1" height="1"><text x="0.40" y="0.40" font-size="7.42" fill="#d6d6d6" text-anchor="start" transform="rotate(0.05 0.40 0.40)">Minne-forbruk</text></svg>
<svg class="ts" style="left:630px;top:131px" width="1" height="1"><text x="0.40" y="0.40" font-size="7.3" fill="#d6d6d6" text-anchor="end" transform="rotate(0.05 0.40 0.40)">12.53% (63.10 GiB of 503.74 GiB)</text></svg>
<div class="b" style="left:262.00px;top:135.20px;width:368.40px;height:2.70px;background:#353535;"></div><div class="b" style="left:262.00px;top:135.20px;width:46.16px;height:2.70px;background:#0468aa;"></div>
<svg style="left:262.50px;top:141.40px" width="7.4" height="7.4" viewBox="0 0 16 16"><path d="M3.2 2.6 L12.8 2.6 L15 9 L15 13.4 L1 13.4 L1 9 Z" fill="none" stroke="#e0e0e0" stroke-width="1.7" stroke-linejoin="round"/><path d="M1 9 L15 9" stroke="#e0e0e0" stroke-width="1.5"/></svg>
<svg class="ts" style="left:273px;top:147px" width="1" height="1"><text x="0.00" y="0.80" font-size="7.42" fill="#d6d6d6" text-anchor="start" transform="rotate(0.05 0.00 0.80)">/ Harddiskplass</text></svg>
<svg class="ts" style="left:630px;top:147px" width="1" height="1"><text x="0.40" y="0.80" font-size="7.3" fill="#d6d6d6" text-anchor="end" transform="rotate(0.05 0.40 0.80)">0.10% (3.99 GiB of 3.97 TiB)</text></svg>
<div class="b" style="left:262.00px;top:151.80px;width:368.40px;height:2.70px;background:#353535;"></div><div class="b" style="left:262.00px;top:151.80px;width:0.80px;height:2.70px;background:#0468aa;"></div>
<svg style="left:643.00px;top:89.90px" width="7.2" height="7.2" viewBox="0 0 16 16"><circle cx="8" cy="8" r="6" fill="none" stroke="#e8e8e8" stroke-width="2"/><path d="M8.6 4.4 L8.6 8.6 L5.6 8.6" fill="none" stroke="#e8e8e8" stroke-width="1.6"/></svg>
<svg class="ts" style="left:653px;top:96px" width="1" height="1"><text x="0.00" y="0.30" font-size="7.42" fill="#d6d6d6" text-anchor="start" transform="rotate(0.05 0.00 0.30)">IO-forsinkels</text></svg>
<svg class="ts" style="left:1010px;top:96px" width="1" height="1"><text x="0.30" y="0.30" font-size="7.3" fill="#d6d6d6" text-anchor="end" transform="rotate(0.05 0.30 0.30)">0.02%</text></svg>
<div class="b" style="left:642.20px;top:100.50px;width:368.10px;height:2.70px;background:#353535;"></div>
<svg class="ts" style="left:641px;top:130px" width="1" height="1"><text x="0.60" y="0.90" font-size="7.42" fill="#d6d6d6" text-anchor="start" transform="rotate(0.05 0.60 0.90)">KSM-deling</text></svg>
<svg class="ts" style="left:1010px;top:130px" width="1" height="1"><text x="0.30" y="0.90" font-size="7.3" fill="#d6d6d6" text-anchor="end" transform="rotate(0.05 0.30 0.90)">0 B</text></svg>
<svg style="left:643.00px;top:141.20px" width="7.0" height="7.0" viewBox="0 0 16 16"><path d="M2 7 A6 6 0 0 1 12.6 4" fill="none" stroke="#e8e8e8" stroke-width="2.6"/><path d="M14.8 1 L14.8 7 L8.8 7 Z" fill="#e8e8e8"/><path d="M14 9 A6 6 0 0 1 3.4 12" fill="none" stroke="#e8e8e8" stroke-width="2.6"/><path d="M1.2 15 L1.2 9 L7.2 9 Z" fill="#e8e8e8"/></svg>
<svg class="ts" style="left:653px;top:147px" width="1" height="1"><text x="0.00" y="0.30" font-size="7.42" fill="#d6d6d6" text-anchor="start" transform="rotate(0.05 0.00 0.30)">Vekseminne-forbruk</text></svg>
<svg class="ts" style="left:1010px;top:147px" width="1" height="1"><text x="0.30" y="0.30" font-size="7.3" fill="#d6d6d6" text-anchor="end" transform="rotate(0.05 0.30 0.30)">N/A</text></svg>
<div class="b" style="left:642.20px;top:151.70px;width:368.10px;height:2.70px;background:#353535;"></div>
<svg class="ts" style="left:262px;top:175px" width="1" height="1"><text x="0.00" y="0.40" font-size="7.42" fill="#d6d6d6" text-anchor="start" transform="rotate(0.05 0.00 0.40)">CPU(s)</text></svg>
<svg class="ts" style="left:1010px;top:175px" width="1" height="1"><text x="0.30" y="0.40" font-size="7.3" fill="#d6d6d6" text-anchor="end" transform="rotate(0.05 0.30 0.40)" textLength="198.1" lengthAdjust="spacingAndGlyphs">48 x Intel(R) Xeon(R) CPU E5-2690 v3 @ 2.60GHz (2 Sokler)</text></svg>
<svg class="ts" style="left:262px;top:189px" width="1" height="1"><text x="0.00" y="0.30" font-size="7.42" fill="#d6d6d6" text-anchor="start" transform="rotate(0.05 0.00 0.30)">Kernel Version</text></svg>
<svg class="ts" style="left:1010px;top:189px" width="1" height="1"><text x="0.30" y="0.30" font-size="7.3" fill="#d6d6d6" text-anchor="end" transform="rotate(0.05 0.30 0.30)" textLength="137.1" lengthAdjust="spacingAndGlyphs">Linux 6.8.12-11-pve (2025-05-22T09:39Z)</text></svg>
<svg class="ts" style="left:262px;top:202px" width="1" height="1"><text x="0.00" y="0.80" font-size="7.42" fill="#d6d6d6" text-anchor="start" transform="rotate(0.05 0.00 0.80)">Boot Mode</text></svg>
<svg class="ts" style="left:1010px;top:202px" width="1" height="1"><text x="0.30" y="0.80" font-size="7.3" fill="#d6d6d6" text-anchor="end" transform="rotate(0.05 0.30 0.80)">EFI</text></svg>
<svg class="ts" style="left:262px;top:216px" width="1" height="1"><text x="0.00" y="0.50" font-size="7.42" fill="#d6d6d6" text-anchor="start" transform="rotate(0.05 0.00 0.50)">Manager Version</text></svg>
<svg class="ts" style="left:1010px;top:216px" width="1" height="1"><text x="0.30" y="0.50" font-size="7.3" fill="#d6d6d6" text-anchor="end" transform="rotate(0.05 0.30 0.50)" textLength="131.3" lengthAdjust="spacingAndGlyphs">pve-manager/8.4.5/57892e8e686cb35b</text></svg>
<svg class="ts" style="left:262px;top:230px" width="1" height="1"><text x="0.00" y="0.40" font-size="7.42" fill="#d6d6d6" text-anchor="start" transform="rotate(0.05 0.00 0.40)">Repository Status</text></svg>
<svg style="left:769.6px;top:223.7px" width="8.6" height="8.6" viewBox="0 0 16 16"><circle cx="8" cy="8" r="7.8" fill="#21bf4b"/><path d="M4.2 8.2 L7 11 L12 5.6" fill="none" stroke="#1f4f30" stroke-width="2.2"/></svg>
<svg class="ts" style="left:780px;top:230px" width="1" height="1"><text x="0.30" y="0.30" font-size="7.3" fill="#d6d6d6" text-anchor="start" transform="rotate(0.05 0.30 0.30)">Proxmox VE updates</text></svg>
<svg style="left:853.2px;top:223.7px" width="8.6" height="8.6" viewBox="0 0 16 16"><circle cx="8" cy="8" r="7.8" fill="#fad42e"/><rect x="6.9" y="3" width="2.2" height="6.4" fill="#6a5200"/><rect x="6.9" y="10.8" width="2.2" height="2.2" fill="#6a5200"/></svg>
<svg class="ts" style="left:863px;top:230px" width="1" height="1"><text x="0.60" y="0.30" font-size="7.5" fill="#d6d6d6" text-anchor="start" transform="rotate(0.05 0.60 0.30)" textLength="138.9" lengthAdjust="spacingAndGlyphs">Non production-ready repository enabled!</text></svg>
<svg style="left:1005.2px;top:225.2px" width="4.4" height="6" viewBox="0 0 4.4 6"><path d="M0.8 0.6 L3.4 3 L0.8 5.4" fill="none" stroke="#f4f4f4" stroke-width="1.3"/></svg>
<div class="b" style="left:253.10px;top:253.10px;width:766.50px;height:192.80px;background:#262626;border:0.7px solid #363531;"></div>
<div class="b" style="left:253.10px;top:253.10px;width:766.50px;height:18.30px;background:#333333;"></div>
<div class="b" style="left:253.10px;top:271.20px;width:766.50px;height:0.60px;background:#45433a;"></div>
<svg class="ts" style="left:258px;top:264px" width="1" height="1"><text x="0.00" y="0.50" font-size="8.6" fill="#2390d0" text-anchor="start" transform="rotate(0.05 0.00 0.50)">CPU-forbruk</text></svg>
<div class="b" style="left:879.30px;top:254.60px;width:122.20px;height:14.10px;background:#2b2b2b;border:0.6px solid #454545;border-radius:1px;"></div>
<div class="b" style="left:940.00px;top:255.00px;width:0.60px;height:13.30px;background:#454545;"></div>
<div class="b" style="left:883.60px;top:260.00px;width:5.80px;height:5.80px;background:#9fbc2a;border-radius:50%;"></div>
<svg class="ts" style="left:893px;top:264px" width="1" height="1"><text x="0.00" y="0.60" font-size="7.3" fill="#e4e4e4" text-anchor="start" transform="rotate(0.05 0.00 0.60)">CPU-forbruk</text></svg>
<div class="b" style="left:944.30px;top:260.00px;width:5.80px;height:5.80px;background:#1670bf;border-radius:50%;"></div>
<svg class="ts" style="left:954px;top:264px" width="1" height="1"><text x="0.00" y="0.60" font-size="7.3" fill="#e4e4e4" text-anchor="start" transform="rotate(0.05 0.00 0.60)">IO-forsinkels</text></svg>
<svg style="left:1004.7px;top:256.7px" width="10" height="10" viewBox="0 0 10 10"><circle cx="5" cy="5" r="4.3" fill="none" stroke="#1c4f70" stroke-width="0.9"/><path d="M2.6 5 L7.4 5" stroke="#1c4f70" stroke-width="0.9"/></svg>
<div class="b" style="left:253.1px;top:271.8px;width:765.10px;height:173px;overflow:hidden;"><div class="b" style="left:-253.1px;top:-271.8px;width:1024px;height:450px;"><svg id="chart" style="left:0;top:0" width="1024" height="450" viewBox="0 0 1024 450"><path d="M287.40 418.40H1014.30M287.40 404.35H1014.30M287.40 390.30H1014.30M287.40 376.25H1014.30M287.40 362.20H1014.30M287.40 348.15H1014.30M287.40 334.10H1014.30M287.40 320.05H1014.30M287.40 306.00H1014.30M287.40 291.95H1014.30M287.40 277.90H1014.30M297.93 277.90V418.40M308.47 277.90V418.40M319.00 277.90V418.40M329.54 277.90V418.40M340.07 277.90V418.40M350.61 277.90V418.40M361.14 277.90V418.40M371.68 277.90V418.40M382.21 277.90V418.40M392.75 277.90V418.40M403.28 277.90V418.40M413.82 277.90V418.40M424.35 277.90V418.40M434.89 277.90V418.40M445.42 277.90V418.40M455.96 277.90V418.40M466.49 277.90V418.40M477.03 277.90V418.40M487.56 277.90V418.40M498.10 277.90V418.40M508.63 277.90V418.40M519.17 277.90V418.40M529.70 277.90V418.40M540.23 277.90V418.40M550.77 277.90V418.40M561.30 277.90V418.40M571.84 277.90V418.40M582.37 277.90V418.40M592.91 277.90V418.40M603.44 277.90V418.40M613.98 277.90V418.40M624.51 277.90V418.40M635.05 277.90V418.40M645.58 277.90V418.40M656.12 277.90V418.40M666.65 277.90V418.40M677.19 277.90V418.40M687.72 277.90V418.40M698.26 277.90V418.40M708.79 277.90V418.40M719.33 277.90V418.40M729.86 277.90V418.40M740.40 277.90V418.40M750.93 277.90V418.40M761.47 277.90V418.40M772.00 277.90V418.40M782.53 277.90V418.40M793.07 277.90V418.40M803.60 277.90V418.40M814.14 277.90V418.40M824.67 277.90V418.40M835.21 277.90V418.40M845.74 277.90V418.40M856.28 277.90V418.40M866.81 277.90V418.40M877.35 277.90V418.40M887.88 277.90V418.40M898.42 277.90V418.40M908.95 277.90V418.40M919.49 277.90V418.40M930.02 277.90V418.40M940.56 277.90V418.40M951.09 277.90V418.40M961.63 277.90V418.40M972.16 277.90V418.40M982.70 277.90V418.40M993.23 277.90V418.40M1003.77 277.90V418.40M1014.30 277.90V418.40" fill="none" stroke="#505050" stroke-width="0.7"/><path d="M287.40 418.40H1014.30" fill="none" stroke="#1a6aa8" stroke-width="0.8"/><polygon points="287.40,418.40 287.40,325.10 297.93,325.90 308.47,320.00 319.00,325.10 329.54,296.50 340.07,311.10 350.61,323.60 361.14,313.90 371.68,324.30 382.21,321.20 392.75,326.20 403.28,308.40 413.82,315.30 424.35,313.70 434.89,321.50 445.42,318.90 455.96,320.00 466.49,319.50 477.03,321.20 487.56,307.20 498.10,316.10 508.63,311.10 519.17,316.50 529.70,321.70 540.23,318.30 550.77,325.40 561.30,317.80 571.84,322.80 582.37,304.30 592.91,311.80 603.44,320.10 613.98,315.40 624.51,321.70 635.05,312.60 645.58,315.75 656.12,320.90 666.65,318.90 677.19,312.60 687.72,323.10 698.26,326.20 708.79,325.90 719.33,324.00 729.86,322.30 740.40,283.70 750.93,303.25 761.47,313.90 772.00,312.60 782.53,310.00 793.07,303.70 803.60,322.80 814.14,322.80 824.67,305.60 835.21,329.50 845.74,318.10 856.28,313.90 866.81,292.00 877.35,318.10 887.88,328.10 898.42,318.90 908.95,313.10 919.49,321.70 930.02,317.00 940.56,319.70 951.09,316.50 961.63,318.90 972.16,304.80 982.70,317.00 993.23,311.50 1003.77,314.70 1014.30,320.40 1014.30,418.40" fill="#91af30" fill-opacity="0.6"/><polyline points="287.40,325.10 297.93,325.90 308.47,320.00 319.00,325.10 329.54,296.50 340.07,311.10 350.61,323.60 361.14,313.90 371.68,324.30 382.21,321.20 392.75,326.20 403.28,308.40 413.82,315.30 424.35,313.70 434.89,321.50 445.42,318.90 455.96,320.00 466.49,319.50 477.03,321.20 487.56,307.20 498.10,316.10 508.63,311.10 519.17,316.50 529.70,321.70 540.23,318.30 550.77,325.40 561.30,317.80 571.84,322.80 582.37,304.30 592.91,311.80 603.44,320.10 613.98,315.40 624.51,321.70 635.05,312.60 645.58,315.75 656.12,320.90 666.65,318.90 677.19,312.60 687.72,323.10 698.26,326.20 708.79,325.90 719.33,324.00 729.86,322.30 740.40,283.70 750.93,303.25 761.47,313.90 772.00,312.60 782.53,310.00 793.07,303.70 803.60,322.80 814.14,322.80 824.67,305.60 835.21,329.50 845.74,318.10 856.28,313.90 866.81,292.00 877.35,318.10 887.88,328.10 898.42,318.90 908.95,313.10 919.49,321.70 930.02,317.00 940.56,319.70 951.09,316.50 961.63,318.90 972.16,304.80 982.70,317.00 993.23,311.50 1003.77,314.70 1014.30,320.40" fill="none" stroke="#91af30" stroke-width="0.6" stroke-opacity="0.8"/><polygon points="287.40,418.40 287.40,414.22 297.93,414.69 308.47,413.75 319.00,414.69 329.54,412.19 340.07,412.81 350.61,414.69 361.14,412.34 371.68,415.00 382.21,415.00 392.75,415.00 403.28,412.03 413.82,413.12 424.35,412.97 434.89,414.69 445.42,414.38 455.96,413.91 466.49,414.53 477.03,413.91 487.56,413.12 498.10,413.28 508.63,414.84 519.17,414.53 529.70,414.53 540.23,413.75 550.77,415.00 561.30,414.38 571.84,415.00 582.37,411.25 592.91,413.12 603.44,414.22 613.98,413.44 624.51,415.00 635.05,413.75 645.58,413.28 656.12,414.84 666.65,414.69 677.19,414.06 687.72,414.84 698.26,414.84 708.79,414.84 719.33,414.38 729.86,414.84 740.40,409.06 750.93,413.12 761.47,414.53 772.00,414.53 782.53,414.38 793.07,413.28 803.60,415.00 814.14,414.22 824.67,414.22 835.21,415.00 845.74,415.00 856.28,414.38 866.81,411.56 877.35,413.75 887.88,415.31 898.42,414.53 908.95,413.12 919.49,415.78 930.02,413.44 940.56,414.53 951.09,414.06 961.63,415.16 972.16,413.12 982.70,414.84 993.23,414.06 1003.77,414.38 1014.30,415.00 1014.30,418.40" fill="#056c91" fill-opacity="0.75"/><polyline points="287.40,414.22 297.93,414.69 308.47,413.75 319.00,414.69 329.54,412.19 340.07,412.81 350.61,414.69 361.14,412.34 371.68,415.00 382.21,415.00 392.75,415.00 403.28,412.03 413.82,413.12 424.35,412.97 434.89,414.69 445.42,414.38 455.96,413.91 466.49,414.53 477.03,413.91 487.56,413.12 498.10,413.28 508.63,414.84 519.17,414.53 529.70,414.53 540.23,413.75 550.77,415.00 561.30,414.38 571.84,415.00 582.37,411.25 592.91,413.12 603.44,414.22 613.98,413.44 624.51,415.00 635.05,413.75 645.58,413.28 656.12,414.84 666.65,414.69 677.19,414.06 687.72,414.84 698.26,414.84 708.79,414.84 719.33,414.38 729.86,414.84 740.40,409.06 750.93,413.12 761.47,414.53 772.00,414.53 782.53,414.38 793.07,413.28 803.60,415.00 814.14,414.22 824.67,414.22 835.21,415.00 845.74,415.00 856.28,414.38 866.81,411.56 877.35,413.75 887.88,415.31 898.42,414.53 908.95,413.12 919.49,415.78 930.02,413.44 940.56,414.53 951.09,414.06 961.63,415.16 972.16,413.12 982.70,414.84 993.23,414.06 1003.77,414.38 1014.30,415.00" fill="none" stroke="#0b5c70" stroke-width="0.6" stroke-opacity="0.8"/><path d="M287.40 277.40V418.90M285.20 418.40H287.40M285.20 404.35H287.40M285.20 390.30H287.40M285.20 376.25H287.40M285.20 362.20H287.40M285.20 348.15H287.40M285.20 334.10H287.40M285.20 320.05H287.40M285.20 306.00H287.40M285.20 291.95H287.40M285.20 277.90H287.40M287.40 418.40V420.80M297.93 418.40V420.80M308.47 418.40V420.80M319.00 418.40V420.80M329.54 418.40V420.80M340.07 418.40V420.80M350.61 418.40V420.80M361.14 418.40V420.80M371.68 418.40V420.80M382.21 418.40V420.80M392.75 418.40V420.80M403.28 418.40V420.80M413.82 418.40V420.80M424.35 418.40V420.80M434.89 418.40V420.80M445.42 418.40V420.80M455.96 418.40V420.80M466.49 418.40V420.80M477.03 418.40V420.80M487.56 418.40V420.80M498.10 418.40V420.80M508.63 418.40V420.80M519.17 418.40V420.80M529.70 418.40V420.80M540.23 418.40V420.80M550.77 418.40V420.80M561.30 418.40V420.80M571.84 418.40V420.80M582.37 418.40V420.80M592.91 418.40V420.80M603.44 418.40V420.80M613.98 418.40V420.80M624.51 418.40V420.80M635.05 418.40V420.80M645.58 418.40V420.80M656.12 418.40V420.80M666.65 418.40V420.80M677.19 418.40V420.80M687.72 418.40V420.80M698.26 418.40V420.80M708.79 418.40V420.80M719.33 418.40V420.80M729.86 418.40V420.80M740.40 418.40V420.80M750.93 418.40V420.80M761.47 418.40V420.80M772.00 418.40V420.80M782.53 418.40V420.80M793.07 418.40V420.80M803.60 418.40V420.80M814.14 418.40V420.80M824.67 418.40V420.80M835.21 418.40V420.80M845.74 418.40V420.80M856.28 418.40V420.80M866.81 418.40V420.80M877.35 418.40V420.80M887.88 418.40V420.80M898.42 418.40V420.80M908.95 418.40V420.80M919.49 418.40V420.80M930.02 418.40V420.80M940.56 418.40V420.80M951.09 418.40V420.80M961.63 418.40V420.80M972.16 418.40V420.80M982.70 418.40V420.80M993.23 418.40V420.80M1003.77 418.40V420.80M1014.30 418.40V420.80" fill="none" stroke="#1a6aa8" stroke-width="0.8"/><g font-family="Liberation Sans, sans-serif" font-size="7.3" fill="#dcdcdc"><text x="276.1" y="421.00" text-anchor="middle">0</text><text x="276.1" y="406.95" text-anchor="middle">0.2</text><text x="276.1" y="392.90" text-anchor="middle">0.4</text><text x="276.1" y="378.85" text-anchor="middle">0.6</text><text x="276.1" y="364.80" text-anchor="middle">0.8</text><text x="276.1" y="350.75" text-anchor="middle">1</text><text x="276.1" y="336.70" text-anchor="middle">1.2</text><text x="276.1" y="322.65" text-anchor="middle">1.4</text><text x="276.1" y="308.60" text-anchor="middle">1.6</text><text x="276.1" y="294.55" text-anchor="middle">1.8</text><text x="276.1" y="280.50" text-anchor="middle">2</text><text x="0" y="0" font-size="8" text-anchor="middle" transform="translate(268.4 348.3) rotate(-90)">%</text><text x="287.90" y="429.7" text-anchor="middle">2025-09-16</text><text x="287.90" y="438.1" text-anchor="middle">10:20:00</text><text x="330.04" y="429.7" text-anchor="middle">2025-09-16</text><text x="330.04" y="438.1" text-anchor="middle">10:24:00</text><text x="372.18" y="429.7" text-anchor="middle">2025-09-16</text><text x="372.18" y="438.1" text-anchor="middle">10:28:00</text><text x="414.32" y="429.7" text-anchor="middle">2025-09-16</text><text x="414.32" y="438.1" text-anchor="middle">10:32:00</text><text x="456.46" y="429.7" text-anchor="middle">2025-09-16</text><text x="456.46" y="438.1" text-anchor="middle">10:36:00</text><text x="498.60" y="429.7" text-anchor="middle">2025-09-16</text><text x="498.60" y="438.1" text-anchor="middle">10:40:00</text><text x="540.73" y="429.7" text-anchor="middle">2025-09-16</text><text x="540.73" y="438.1" text-anchor="middle">10:44:00</text><text x="582.87" y="429.7" text-anchor="middle">2025-09-16</text><text x="582.87" y="438.1" text-anchor="middle">10:48:00</text><text x="625.01" y="429.7" text-anchor="middle">2025-09-16</text><text x="625.01" y="438.1" text-anchor="middle">10:52:00</text><text x="667.15" y="429.7" text-anchor="middle">2025-09-16</text><text x="667.15" y="438.1" text-anchor="middle">10:56:00</text><text x="709.29" y="429.7" text-anchor="middle">2025-09-16</text><text x="709.29" y="438.1" text-anchor="middle">11:00:00</text><text x="751.43" y="429.7" text-anchor="middle">2025-09-16</text><text x="751.43" y="438.1" text-anchor="middle">11:04:00</text><text x="793.57" y="429.7" text-anchor="middle">2025-09-16</text><text x="793.57" y="438.1" text-anchor="middle">11:08:00</text><text x="835.71" y="429.7" text-anchor="middle">2025-09-16</text><text x="835.71" y="438.1" text-anchor="middle">11:12:00</text><text x="877.85" y="429.7" text-anchor="middle">2025-09-16</text><text x="877.85" y="438.1" text-anchor="middle">11:16:00</text><text x="919.99" y="429.7" text-anchor="middle">2025-09-16</text><text x="919.99" y="438.1" text-anchor="middle">11:20:00</text><text x="962.13" y="429.7" text-anchor="middle">2025-09-16</text><text x="962.13" y="438.1" text-anchor="middle">11:24:00</text><text x="1004.27" y="429.7" text-anchor="middle">2025-09-16</text><text x="1004.27" y="438.1" text-anchor="middle">11:28:00</text></g></svg></div></div>
</div>
</div>
</div>
</body>
</html>
